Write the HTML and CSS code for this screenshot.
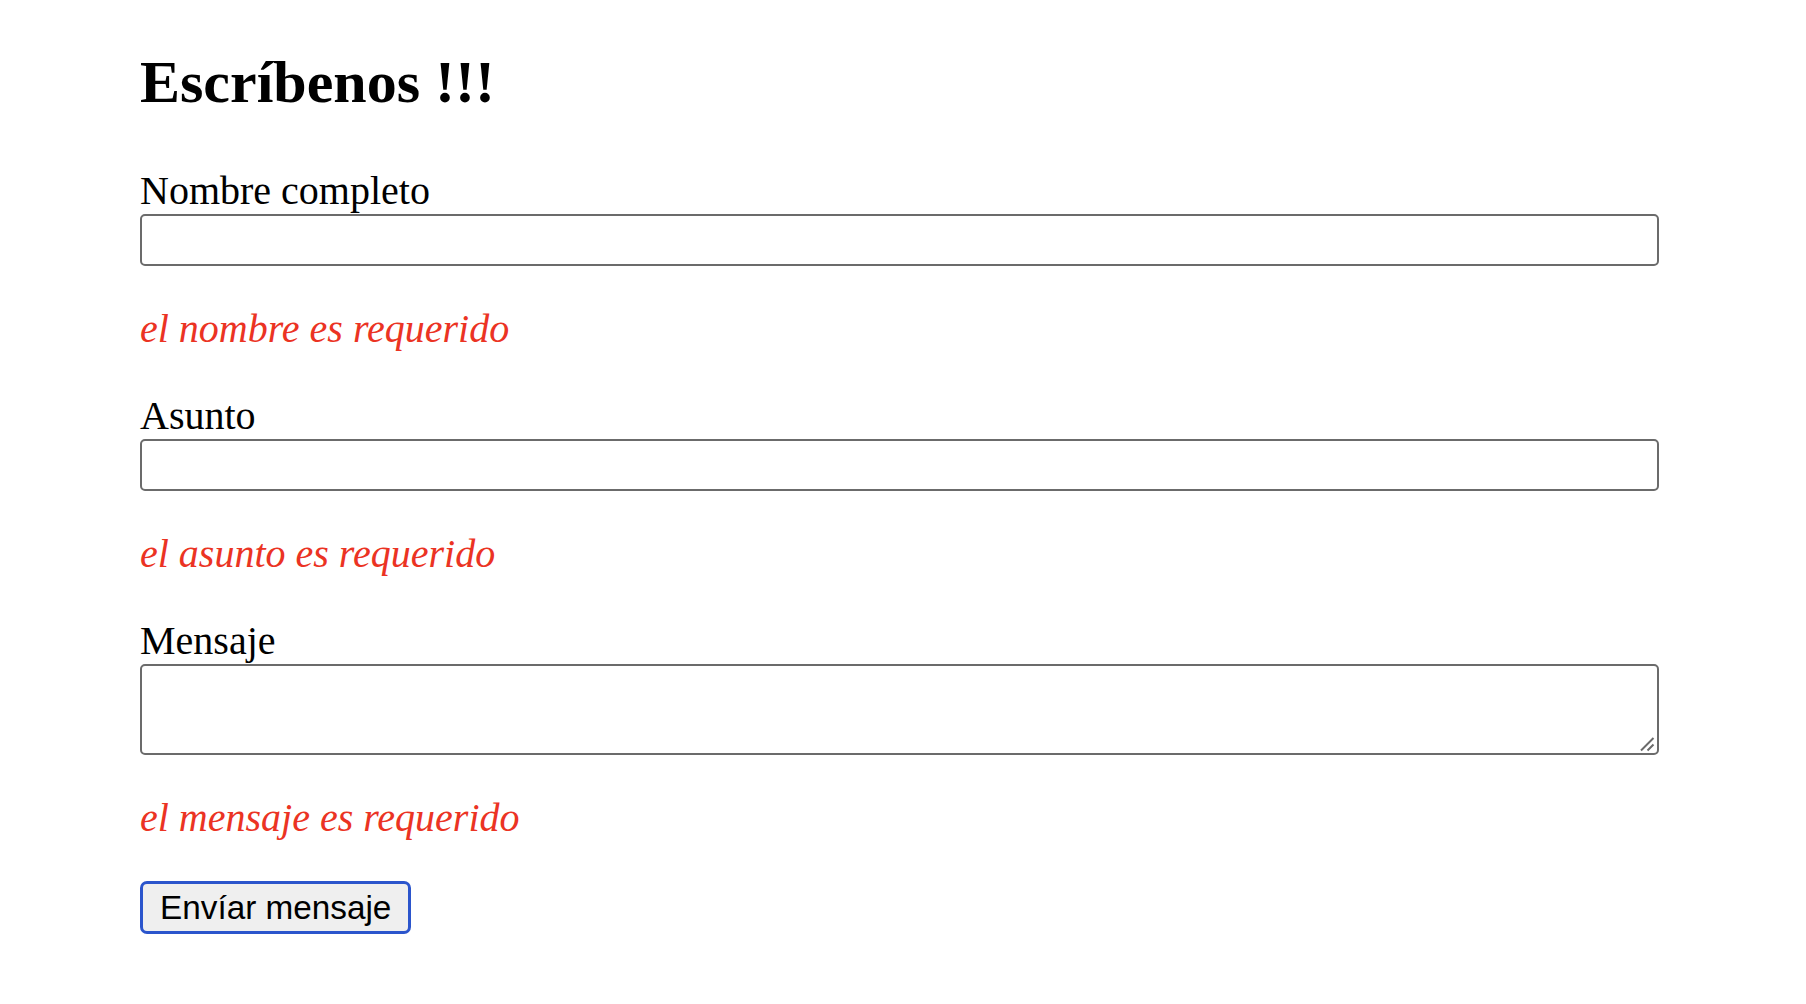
FILE: index.html
```html
<!DOCTYPE html>
<html lang="es">
<head>
<meta charset="utf-8">
<title>Escríbenos</title>
<link rel="stylesheet" href="styles.css">
</head>
<body>
<main class="page">
  <h2 class="title">Escríbenos !!!</h2>
  <form class="form">
    <label class="label" for="nombre">Nombre completo</label>
    <input class="field" id="nombre" type="text">
    <p class="error">el nombre es requerido</p>

    <label class="label" for="asunto">Asunto</label>
    <input class="field" id="asunto" type="text">
    <p class="error">el asunto es requerido</p>

    <label class="label" for="mensaje">Mensaje</label>
    <div class="area-wrap">
      <textarea class="field area" id="mensaje"></textarea>
      <svg class="grip" width="16" height="16" viewBox="0 0 16 16" aria-hidden="true">
        <path d="M1 14.5 L13.5 2 M7.5 14.5 L13.5 8.5" stroke="#6b6b6b" stroke-width="2" fill="none"/>
      </svg>
    </div>
    <p class="error">el mensaje es requerido</p>

    <button class="submit" type="submit">Envíar mensaje</button>
  </form>
</main>
</body>
</html>
```

FILE: styles.css
```css
html, body {
  margin: 0;
  padding: 0;
  background: #ffffff;
}

.page {
  padding: 48px 0 0 140px;
  font-family: "Liberation Serif", "Times New Roman", serif;
  color: #000000;
}

.title {
  margin: 0 0 50px 0;
  font-size: 60px;
  line-height: 69px;
  font-weight: bold;
}

.form {
  display: flex;
  flex-direction: column;
  align-items: flex-start;
  width: 1519px;
}

.label {
  display: block;
  font-size: 40px;
  line-height: 48px;
  height: 47px;
}

.field {
  box-sizing: border-box;
  display: block;
  width: 1519px;
  height: 52px;
  margin: 0;
  border: 2px solid #6b6b6b;
  border-radius: 5px;
  background: #ffffff;
  font-size: 33px;
  font-family: "Liberation Sans", Arial, sans-serif;
}

.area-wrap {
  position: relative;
  width: 1519px;
}

.area {
  height: 91px;
  resize: none;
}

.grip {
  position: absolute;
  right: 3px;
  bottom: 3px;
}

.error {
  margin: 39px 0;
  font-size: 40px;
  line-height: 48px;
  font-style: italic;
  color: #eb3323;
}

.submit {
  box-sizing: border-box;
  height: 53px;
  margin: 0;
  padding: 0 17px;
  border: 3.5px solid #2b55cc;
  border-radius: 7px;
  background: #efefef;
  color: #000000;
  font-family: "Liberation Sans", Arial, Helvetica, sans-serif;
  font-size: 33.3px;
  line-height: 1;
}
```
